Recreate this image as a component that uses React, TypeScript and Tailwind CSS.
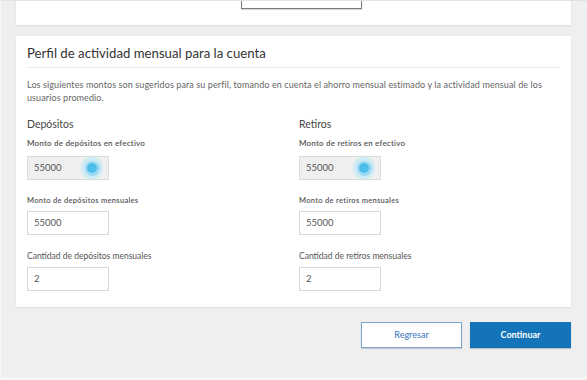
import React from "react";

interface FieldProps {
  label: string;
  value: string;
  labelClass: string;
  disabled?: boolean;
}

const Field = ({ label, value, labelClass, disabled }: FieldProps) => {
  return (
    <div className="flex flex-col">
      <label className={labelClass}>{label}</label>
      <div
        className={
          disabled
            ? "relative w-[82px] h-[24px] bg-[#efefef] border border-[#dcdcdc] flex items-center pl-[6px] text-[9.5px] text-[#555]"
            : "relative w-[82px] h-[24px] bg-white border border-[#d6d6d6] flex items-center pl-[6px] text-[9.5px] text-[#555]"
        }
      >
        {value}
        {disabled && (
          <span className="absolute left-[53px] top-[0px] w-[22px] h-[22px] rounded-full bg-[#cdebf7] flex items-center justify-center">
            <span className="w-[15px] h-[15px] rounded-full bg-[#9fd9f1] flex items-center justify-center">
              <span className="w-[10px] h-[10px] rounded-full bg-[#4cbfe8]" />
            </span>
          </span>
        )}
      </div>
    </div>
  );
};

const Column = ({ title, kind }: { title: string; kind: string }) => {
  return (
    <div className="flex flex-col">
      <h3 className="text-[10.5px] leading-[14px] text-[#444] mb-[7px]">{title}</h3>
      <div className="mb-[15px]">
        <Field
          label={`Monto de ${kind} en efectivo`}
          value="55000"
          disabled
          labelClass="text-[8px] leading-[11px] font-semibold text-[#555] mb-[7px] tracking-[0.2px]"
        />
      </div>
      <div className="mb-[15px]">
        <Field
          label={`Monto de ${kind} mensuales`}
          value="55000"
          labelClass="text-[7.5px] leading-[11px] font-semibold text-[#555] mb-[5px] tracking-[0.3px]"
        />
      </div>
      <Field
        label={`Cantidad de ${kind} mensuales`}
        value="2"
        labelClass="text-[8.5px] leading-[12px] text-[#555] mb-[5px]"
      />
    </div>
  );
};

export default function App() {
  return (
    <div className="w-[587px] h-[380px] bg-[#efefef] border-l border-[#f8f8f8] border-t border-t-[#e2e2e2] flex flex-col overflow-hidden font-['Lato',sans-serif]">
      <div className="pl-[15px] pr-[16px] flex flex-col">
        {/* top card, mostly scrolled away */}
        <div className="h-[24px] bg-white shadow-[0_1px_2px_rgba(0,0,0,0.08)]">
          <div className="ml-[225px] w-[121px] h-[8px] border border-t-0 border-[#7a7a7a] shadow-[0_1px_1px_rgba(0,0,0,0.15)]" />
        </div>

        <div className="mt-[11px] bg-white shadow-[0_1px_2px_rgba(0,0,0,0.08)] pl-[11px] pr-[12px] pt-[7px] pb-[16px]">
          <h2 className="text-[13.2px] leading-[20px] text-[#333] pb-[4px] border-b border-[#e6e6e6]">
            Perfil de actividad mensual para la cuenta
          </h2>
          <p className="mt-[10px] text-[9px] leading-[13px] tracking-[0.1px] text-[#666] pr-[4px]">
            Los siguientes montos son sugeridos para su perfil, tomando en cuenta el ahorro mensual estimado y la actividad mensual de los usuarios promedio.
          </p>
          <div className="mt-[13px] grid grid-cols-2 gap-x-3">
            <Column title="Depósitos" kind="depósitos" />
            <Column title="Retiros" kind="retiros" />
          </div>
        </div>

        <div className="mt-[15px] flex justify-end gap-[8px]">
          <button className="w-[101px] h-[26px] bg-white border border-[#7aa5cf] text-[#4a7ec0] text-[9px] font-medium shadow-[0_1px_1px_rgba(0,0,0,0.15)]">
            Regresar
          </button>
          <button className="w-[101px] h-[26px] bg-[#1474ba] text-white font-bold text-[9px] shadow-[0_1px_1px_rgba(0,0,0,0.2)]">
            Continuar
          </button>
        </div>
      </div>
      <div className="flex-1" />
      <div className="h-[3px] bg-[#f6f6f6]" />
    </div>
  );
}
